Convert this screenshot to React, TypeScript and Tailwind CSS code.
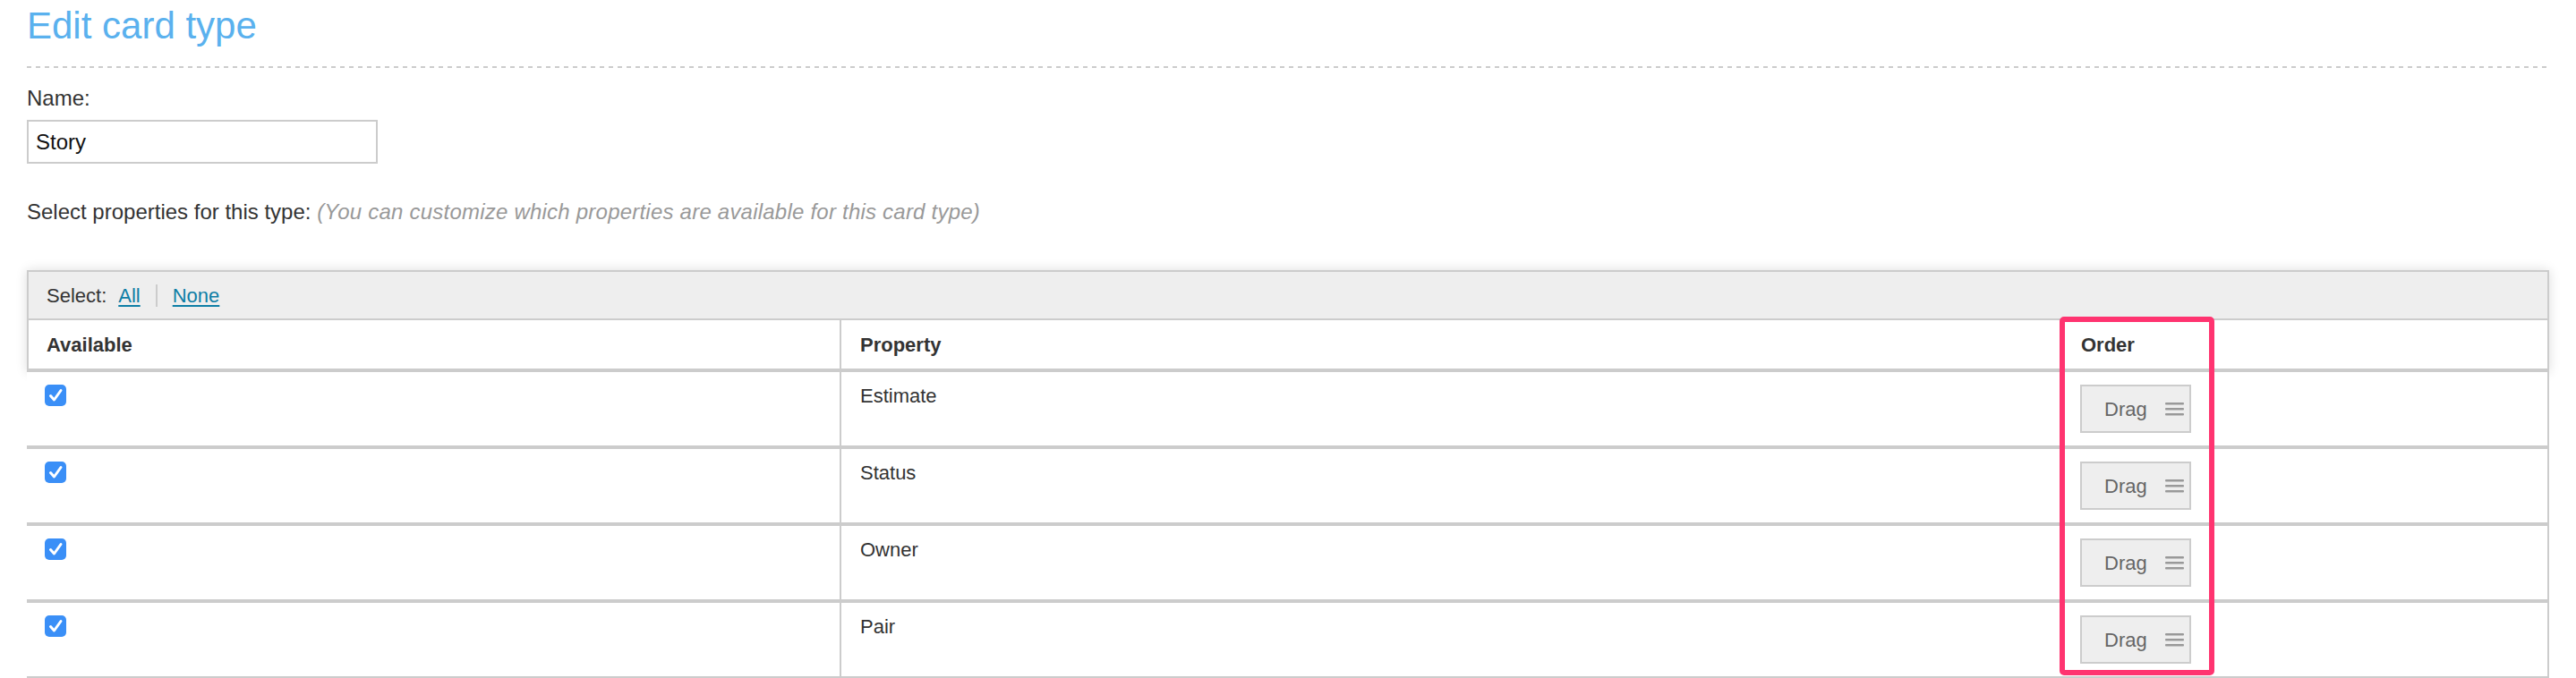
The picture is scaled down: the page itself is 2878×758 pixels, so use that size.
import { useState } from "react";

const PROPERTIES = ["Estimate", "Status", "Owner", "Pair"];

function Checkbox({ checked, onToggle }: { checked: boolean; onToggle: () => void }) {
  return (
    <button
      type="button"
      onClick={onToggle}
      aria-label="Available"
      className={
        checked
          ? "flex h-[24px] w-[24px] items-center justify-center rounded-[5px] bg-[#3a8ff7]"
          : "flex h-[24px] w-[24px] items-center justify-center rounded-[5px] border-2 border-[#bbb] bg-white"
      }
    >
      {checked && (
        <svg viewBox="0 0 24 24" className="h-[24px] w-[24px]" fill="none" stroke="white" strokeWidth="3" strokeLinecap="round" strokeLinejoin="round">
          <path d="M6.5 12.5L10.5 17L18 6.5" />
        </svg>
      )}
    </button>
  );
}

function DragHandle() {
  return (
    <div className="flex h-[54px] w-[124px] items-center border-2 border-[#ccc] bg-[#eee] pl-[25px] text-[22px] text-[#666]">
      <span>Drag</span>
      <svg viewBox="0 0 21 15" className="ml-auto mr-[6px] h-[15px] w-[21px]" fill="#999">
        <rect x="0" y="0" width="21" height="2.5" rx="1" />
        <rect x="0" y="6" width="21" height="2.5" rx="1" />
        <rect x="0" y="12" width="21" height="2.5" rx="1" />
      </svg>
    </div>
  );
}

export default function App() {
  const [name, setName] = useState("Story");
  const [checked, setChecked] = useState<Record<string, boolean>>(
    Object.fromEntries(PROPERTIES.map((p) => [p, true]))
  );

  const setAll = (value: boolean) => setChecked(Object.fromEntries(PROPERTIES.map((p) => [p, value])));

  return (
    <div className="min-h-screen bg-white px-[30px] font-['Liberation_Sans',Arial,sans-serif] text-[#333]">
      <h1 className="pt-[5px] text-[42px] leading-[48px] font-normal text-[#5ab1ee]">Edit card type</h1>

      <div className="mt-[21px] h-[2px] bg-[repeating-linear-gradient(to_right,#ccc_0_5px,transparent_5px_10px)]" />

      <label className="mt-[20px] block text-[24px] leading-[28px]">Name:</label>
      <input
        value={name}
        onChange={(e) => setName(e.target.value)}
        className="mt-[10px] block h-[49px] w-[392px] border-2 border-[#ccc] px-[8px] text-[24px] text-[#111] outline-none"
      />

      <p className="mt-[40px] text-[24px] leading-[28px]">
        Select properties for this type:{" "}
        <em className="tracking-[0.22px] text-[#999]">(You can customize which properties are available for this card type)</em>
      </p>

      <div className="relative mt-[51px]">
        <div className="border-2 border-b-0 border-[#ccc] bg-white shadow-[0_0_12px_rgba(0,0,0,0.14)]">
          <div className="flex h-[54px] items-center border-b-2 border-[#ccc] bg-[#eee] pl-[20px] text-[22px]">
            <span>Select:</span>
            <button type="button" onClick={() => setAll(true)} className="ml-[13px] text-[#0e7ea6] underline decoration-2 underline-offset-[3px]">
              All
            </button>
            <span className="mx-[17px] h-[25px] w-[2px] bg-[#ccc]" />
            <button type="button" onClick={() => setAll(false)} className="text-[#0e7ea6] underline decoration-2 underline-offset-[3px]">
              None
            </button>
          </div>
          <div className="flex h-[58px] border-b-4 border-[#ccc] text-[22px] font-bold">
            <div className="flex w-[906px] items-center pl-[20px]">Available</div>
            <div className="flex w-[1365px] items-center border-l-2 border-[#ccc] pl-[21px]">Property</div>
            <div className="flex flex-1 items-center pl-[22px]">Order</div>
          </div>
        </div>

        {PROPERTIES.map((property) => (
          <div key={property} className="relative flex h-[86px] border-r-2 border-b-4 border-[#ccc] bg-white text-[22px]">
            <div className="w-[908px] pt-[14px] pl-[20px]">
              <Checkbox
                checked={checked[property]}
                onToggle={() => setChecked((prev) => ({ ...prev, [property]: !prev[property] }))}
              />
            </div>
            <div className="w-[1365px] border-l-2 border-[#ccc] pt-[12px] pl-[21px] leading-[30px]">{property}</div>
            <div className="flex-1 pt-[14px] pl-[21px]">
              <DragHandle />
            </div>
          </div>
        ))}

        {/* highlight around the order column */}
        <div className="pointer-events-none absolute top-[52px] left-[2271px] h-[401px] w-[173px] rounded-[5px] border-[6px] border-[#ff3470]" />
      </div>
    </div>
  );
}
